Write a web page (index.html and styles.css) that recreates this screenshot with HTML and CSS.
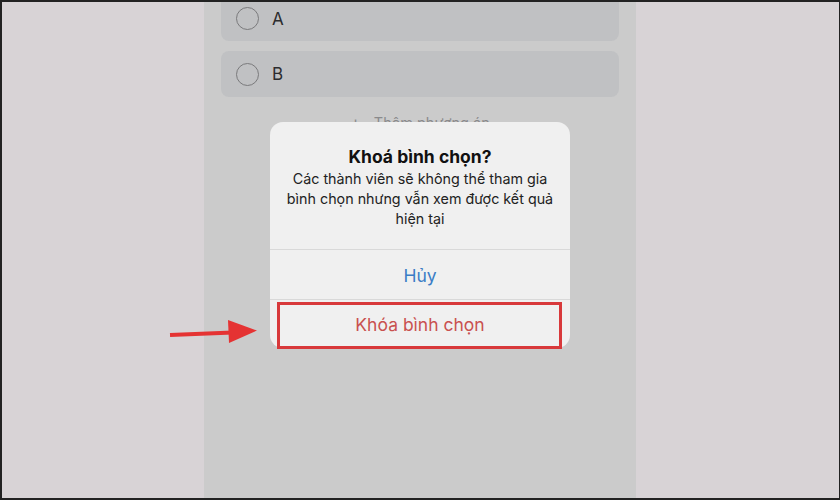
FILE: index.html
```html
<!DOCTYPE html>
<html lang="vi">
<head>
<meta charset="utf-8">
<link rel="stylesheet" href="styles.css">
</head>
<body>
<div class="frame">
  <div class="phone">
    <div class="list">
      <div class="option first"><span class="radio"></span><span class="label">A</span></div>
      <div class="option"><span class="radio"></span><span class="label">B</span></div>
      <div class="add"><span class="plus">+</span>Thêm phương án</div>
    </div>
  </div>

  <div class="dialog">
    <div class="dialog-body">
      <div class="title">Khoá bình chọn?</div>
      <div class="message">Các thành viên sẽ không thể tham gia bình chọn nhưng vẫn xem được kết quả hiện tại</div>
    </div>
    <div class="btn cancel">Hủy</div>
    <div class="btn lock">Khóa bình chọn</div>
  </div>

  <div class="highlight"></div>

  <svg class="arrow" width="100" height="34" viewBox="0 0 100 34">
    <line x1="5" y1="19" x2="68" y2="16.5" stroke="#e53333" stroke-width="4"/>
    <polygon points="63,4 92,14.5 64,27" fill="#e53333"/>
  </svg>
</div>
</body>
</html>
```

FILE: styles.css
```css
* { box-sizing: border-box; }
body {
  margin: 0;
  font-family: Inter, "Liberation Sans", sans-serif;
}
.frame {
  position: relative;
  width: 840px;
  height: 500px;
  background: #d8d3d6;
  border: 1px solid #222;
  border-width: 2px 1px 2px 2px;
  overflow: hidden;
  display: flex;
  justify-content: flex-start;
}
.phone {
  margin-left: 202px;
  width: 432px;
  height: 100%;
  background: #cbcbcb;
}
.list {
  padding: 0 17px;
  display: flex;
  flex-direction: column;
  gap: 10px;
}
.option {
  height: 46px;
  background: #c0c1c3;
  border-radius: 8px;
  display: flex;
  align-items: center;
  padding-left: 15px;
  gap: 13px;
}
.option.first {
  margin-top: -8px;
  height: 47px;
  padding-top: 2px;
}
.radio {
  width: 23px;
  height: 23px;
  border: 1.5px solid #7a7a7c;
  border-radius: 50%;
}
.label {
  font-size: 17px;
  color: #2c2c2e;
}
.add {
  margin-top: 5px;
  text-align: center;
  font-size: 14.5px;
  color: #8a8a8c;
  padding-left: 0;
}
.plus {
  margin-right: 13px;
  font-size: 16px;
}
.dialog {
  position: absolute;
  left: 268px;
  top: 120px;
  width: 300px;
  height: 226px;
  background: #f0f0f0;
  border-radius: 13px;
  display: flex;
  flex-direction: column;
  overflow: hidden;
}
.dialog-body {
  height: 128px;
  padding: 23px 14px 0;
  text-align: center;
  border-bottom: 1px solid #d9d9d9;
}
.title {
  font-size: 17.5px;
  font-weight: 700;
  line-height: 24px;
  color: #111;
}
.message {
  font-size: 14.3px;
  line-height: 20px;
  color: #222;
}
.btn {
  height: 50px;
  display: flex;
  align-items: center;
  justify-content: center;
  font-size: 17.5px;
}
.cancel {
  color: #3a7dc6;
  border-bottom: 1px solid #d9d9d9;
  padding-top: 1px;
}
.lock {
  color: #c9514f;
  height: 47px;
  padding-top: 1px;
}
.highlight {
  position: absolute;
  left: 275px;
  top: 300px;
  width: 285px;
  height: 47px;
  border: 3px solid #d8393b;
}
.arrow {
  position: absolute;
  left: 163px;
  top: 314px;
}
```
